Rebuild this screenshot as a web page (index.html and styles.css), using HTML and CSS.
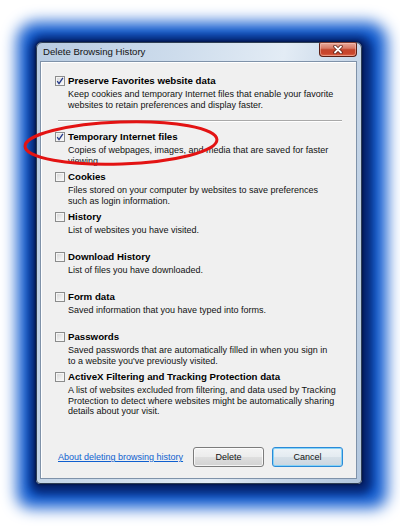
FILE: index.html
```html
<!DOCTYPE html>
<html>
<head>
<meta charset="utf-8">
<title>Delete Browsing History</title>
<link rel="stylesheet" href="styles.css">
</head>
<body>
<div class="stage">
  <div class="window">
    <div class="titlebar">
      <span class="title">Delete Browsing History</span>
      <div class="close">
        <svg width="12" height="9" viewBox="0 0 12 9">
          <path d="M3 1.5 L9 7.5 M9 1.5 L3 7.5" stroke="#5a1c12" stroke-width="3.4" stroke-linecap="round" fill="none"/>
          <path d="M3 1.5 L9 7.5 M9 1.5 L3 7.5" stroke="#ffffff" stroke-width="1.8" stroke-linecap="round" fill="none"/>
        </svg>
      </div>
    </div>
    <div class="client">
      <div class="item first">
        <span class="cb"><svg class="tick" width="8" height="8" viewBox="0 0 8 8"><path d="M1.2 4.2 L3 6.6 L6.9 0.8" stroke="#22388a" stroke-width="1.3" fill="none"/></svg></span>
        <div class="text">
          <div class="head">Preserve Favorites website data</div>
          <div class="desc">Keep cookies and temporary Internet files that enable your favorite<br>websites to retain preferences and display faster.</div>
        </div>
      </div>
      <div class="sep"></div>
      <div class="list">
        <div class="item">
          <span class="cb"><svg class="tick" width="8" height="8" viewBox="0 0 8 8"><path d="M1.2 4.2 L3 6.6 L6.9 0.8" stroke="#22388a" stroke-width="1.3" fill="none"/></svg></span>
          <div class="text">
            <div class="head">Temporary Internet files</div>
            <div class="desc">Copies of webpages, images, and media that are saved for faster<br>viewing.</div>
          </div>
        </div>
        <div class="item">
          <span class="cb"></span>
          <div class="text">
            <div class="head">Cookies</div>
            <div class="desc">Files stored on your computer by websites to save preferences<br>such as login information.</div>
          </div>
        </div>
        <div class="item">
          <span class="cb"></span>
          <div class="text">
            <div class="head">History</div>
            <div class="desc">List of websites you have visited.</div>
          </div>
        </div>
        <div class="item">
          <span class="cb"></span>
          <div class="text">
            <div class="head">Download History</div>
            <div class="desc">List of files you have downloaded.</div>
          </div>
        </div>
        <div class="item">
          <span class="cb"></span>
          <div class="text">
            <div class="head">Form data</div>
            <div class="desc">Saved information that you have typed into forms.</div>
          </div>
        </div>
        <div class="item">
          <span class="cb"></span>
          <div class="text">
            <div class="head">Passwords</div>
            <div class="desc">Saved passwords that are automatically filled in when you sign in<br>to a website you've previously visited.</div>
          </div>
        </div>
        <div class="item">
          <span class="cb"></span>
          <div class="text">
            <div class="head">ActiveX Filtering and Tracking Protection data</div>
            <div class="desc">A list of websites excluded from filtering, and data used by Tracking<br>Protection to detect where websites might be automatically sharing<br>details about your visit.</div>
          </div>
        </div>
      </div>
      <div class="footer">
        <a class="link" href="#">About deleting browsing history</a>
        <div class="buttons">
          <span class="btn">Delete</span>
          <span class="btn default">Cancel</span>
        </div>
      </div>
    </div>
  </div>
  <svg class="ring" width="400" height="527" viewBox="0 0 400 527">
    <ellipse cx="121" cy="143" rx="96" ry="21" transform="rotate(-2 121 143)" fill="none" stroke="#e31313" stroke-width="3"/>
  </svg>
</div>
</body>
</html>
```
FILE: styles.css
```css
* { box-sizing: border-box; }
html, body { margin: 0; padding: 0; background: #ffffff; }
body {
  width: 400px;
  height: 527px;
  overflow: hidden;
  font-family: "Liberation Sans", Arial, sans-serif;
  color: #111111;
}
.stage {
  position: relative;
  width: 400px;
  height: 527px;
  padding: 42px 0 0 36px;
}
.window {
  width: 326px;
  height: 442px;
  display: flex;
  flex-direction: column;
  padding: 0 4px 4px 3px;
  border: 1px solid #2f3f54;
  border-radius: 6px 6px 4px 4px;
  background: linear-gradient(100deg, #b8cbe1 0%, #cddcec 35%, #e3ecf5 62%, #c9d8e9 78%, #b3c7de 100%);
  box-shadow:
    0 0 3px 1px rgba(0, 12, 50, 0.75),
    2px 2px 9px 8px rgba(6, 34, 108, 0.95),
    3px 2px 15px 22px #115cd0;
}
.titlebar {
  height: 18px;
  display: flex;
  align-items: flex-start;
}
.title {
  margin: 3px 0 0 3px;
  font-size: 9.6px;
  line-height: 12px;
  color: #141414;
}
.close {
  margin-left: auto;
  margin-top: -1px;
  width: 38px;
  height: 15px;
  border: 1px solid #5b1e14;
  border-top-color: #7a3a30;
  border-radius: 2px 2px 4px 4px;
  background: linear-gradient(#e7a99b 0%, #d87a66 40%, #c4452c 52%, #c9452c 80%, #dc6a4c 100%);
  box-shadow: inset 0 0 0 1px rgba(255, 210, 200, 0.45);
  display: flex;
  align-items: center;
  justify-content: center;
}
.client {
  flex: 1;
  display: flex;
  flex-direction: column;
  background: #f0f0f0;
  border: 1px solid #7f92a9;
  box-shadow: inset 1px 1px 0 #ffffff;
  padding: 13px 13px 11px 14px;
}
.item {
  display: flex;
  align-items: flex-start;
}
.list .item { height: 40px; }
.cb {
  flex: none;
  width: 10px;
  height: 10px;
  margin: 1px 3px 0 0;
  border: 1px solid #8b8c8c;
  background: linear-gradient(135deg, #d3d3d3 0%, #ececec 55%, #fbfbfb 100%);
  box-shadow: inset 0 0 0 1px #f6f6f6;
  display: flex;
  align-items: center;
  justify-content: center;
}
.tick { display: block; }
.head {
  font-weight: bold;
  font-size: 9.7px;
  line-height: 12px;
  color: #000000;
  white-space: nowrap;
}
.desc {
  margin-top: 2px;
  font-size: 9px;
  line-height: 10.5px;
  color: #111111;
  white-space: nowrap;
}
.sep {
  height: 1px;
  margin: 10px 1px 10px 3px;
  background: #a9a9a9;
  box-shadow: 0 1px 0 #ffffff;
}
.footer {
  margin-top: auto;
  display: flex;
  align-items: center;
  justify-content: space-between;
  padding-left: 3px;
}
.link {
  font-size: 9px;
  color: #0f5fcf;
  text-decoration: underline;
}
.buttons {
  display: flex;
  gap: 8px;
}
.btn {
  width: 71px;
  height: 20px;
  border: 1px solid #7c7c7c;
  border-radius: 3px;
  background: linear-gradient(#f4f4f4 0%, #ececec 48%, #dedede 52%, #d2d2d2 100%);
  box-shadow: inset 0 0 0 1px rgba(255, 255, 255, 0.75);
  font-size: 9px;
  color: #111111;
  display: flex;
  align-items: center;
  justify-content: center;
}
.btn.default {
  border-color: #2a8ad8;
  background: linear-gradient(#eef3f7 0%, #e4ebf1 48%, #d6e0e8 52%, #cbd6e0 100%);
  box-shadow: inset 0 0 0 1px #86d3f6;
}
.ring {
  position: absolute;
  left: 0;
  top: 0;
  pointer-events: none;
}
```
